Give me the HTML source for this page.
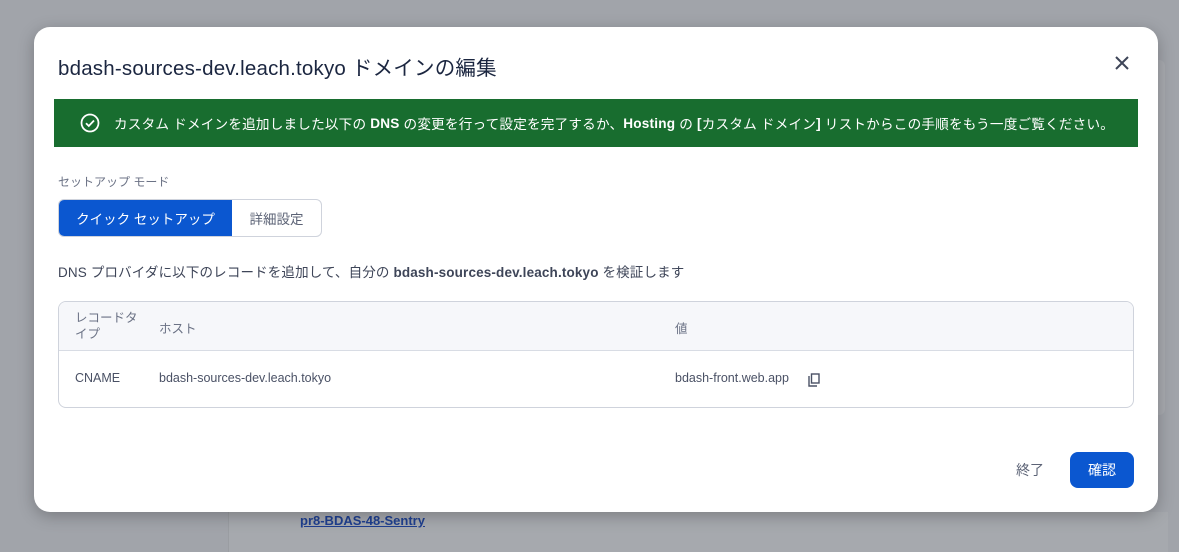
<!DOCTYPE html>
<html><head><meta charset="utf-8"><style>
*{box-sizing:border-box;margin:0;padding:0}
body{width:1179px;height:527px;overflow:hidden;background:#a1a4aa;font-family:"Liberation Sans","Noto Sans CJK JP",sans-serif;position:relative}
.bgcard{position:absolute;left:228px;top:512px;width:940px;height:40px;background:#a6a9ae;border-left:1px solid #9a9da2}
.bgcard a{position:absolute;left:71px;top:1px;font-size:13px;color:#1f3f8f;font-weight:bold;text-decoration:underline}
.bgr{position:absolute;left:1150px;top:60px;width:15px;height:355px;background:#a8abb0;border-radius:0 6px 6px 0}
.dlg{position:absolute;left:34px;top:27px;width:1124px;height:485px;background:#fff;border-radius:16px;box-shadow:0 4px 16px rgba(0,0,0,.25)}
.title{position:absolute;left:24px;top:24px;font-size:20.5px;color:#1b2640;letter-spacing:0.2px;white-space:nowrap}
.x{position:absolute;left:1080px;top:28px}
.banner{position:absolute;left:20px;top:72px;width:1084px;height:48px;background:#186d2f;color:#fff;font-size:13.6px;display:flex;align-items:center;padding-left:26px;white-space:nowrap;letter-spacing:0.2px}
.banner svg{margin-right:14px}
.lbl{position:absolute;left:24px;top:146px;font-size:12px;color:#6b7285}
.seg{position:absolute;left:24px;top:172px;height:38px;border:1px solid #cfd3dc;border-radius:6px;display:flex;overflow:hidden;font-size:13.5px;white-space:nowrap}
.seg div{display:flex;align-items:center}
.seg .on{background:#0b57d0;color:#fff;width:173px;justify-content:center}
.seg .off{color:#5c6376;width:89px;justify-content:center}
.desc{position:absolute;left:24px;top:234px;font-size:13.5px;color:#3e4558;white-space:nowrap;letter-spacing:0.15px}
.tbl{position:absolute;left:24px;top:274px;width:1076px;height:107px;border:1px solid #cfd3dc;border-radius:8px;overflow:hidden;font-size:12.5px;color:#4a5165}
.th{height:49px;background:#f6f7fa;border-bottom:1px solid #d8dce4;position:relative;color:#6b7285}
.th span,.tr span{position:absolute}
.tr{position:relative;height:57px}
.btn1{position:absolute;left:982px;top:433px;font-size:14px;color:#5c6376}
.btn2{position:absolute;left:1036px;top:425px;width:64px;height:36px;background:#0b57d0;border-radius:8px;color:#fff;font-size:14px;display:flex;align-items:center;justify-content:center}
</style></head><body>
<div class="bgr"></div>
<div class="bgcard"><a>pr8-BDAS-48-Sentry</a></div>
<div class="dlg">
<div class="title">bdash-sources-dev.leach.tokyo ドメインの編集</div>
<svg class="x" width="16" height="16" viewBox="0 0 16 16"><path d="M2 2L14 14M14 2L2 14" stroke="#3e4558" stroke-width="2"/></svg>
<div class="banner"><svg width="20" height="20" viewBox="0 0 20 20"><circle cx="10" cy="10" r="8.5" fill="none" stroke="#fff" stroke-width="1.8"/><path d="M6 10.2l2.8 2.8 5.2-5.5" fill="none" stroke="#fff" stroke-width="1.8"/></svg>カスタム ドメインを追加しました以下の <b>&nbsp;DNS&nbsp;</b> の変更を行って設定を完了するか、<b>Hosting&nbsp;</b> の <b>&nbsp;[</b>カスタム ドメイン<b>]</b>&nbsp;リストからこの手順をもう一度ご覧ください。</div>
<div class="lbl">セットアップ モード</div>
<div class="seg"><div class="on">クイック セットアップ</div><div class="off">詳細設定</div></div>
<div class="desc">DNS プロバイダに以下のレコードを追加して、自分の <b>bdash-sources-dev.leach.tokyo</b> を検証します</div>
<div class="tbl">
<div class="th"><span style="left:16px;top:8px;line-height:16px">レコードタ<br>イプ</span><span style="left:100px;top:16px">ホスト</span><span style="left:616px;top:16px">値</span></div>
<div class="tr"><span style="left:16px;top:20px">CNAME</span><span style="left:100px;top:20px">bdash-sources-dev.leach.tokyo</span><span style="left:616px;top:20px">bdash-front.web.app</span>
<svg style="position:absolute;left:748px;top:22px" width="14" height="14" viewBox="0 0 14 14"><path d="M2 3v10h8" fill="none" stroke="#4a5165" stroke-width="1.4"/><rect x="4.5" y="1" width="7.5" height="9" fill="none" stroke="#4a5165" stroke-width="1.4"/></svg></div>
</div>
<div class="btn1">終了</div>
<div class="btn2">確認</div>
</div>
</body></html>
